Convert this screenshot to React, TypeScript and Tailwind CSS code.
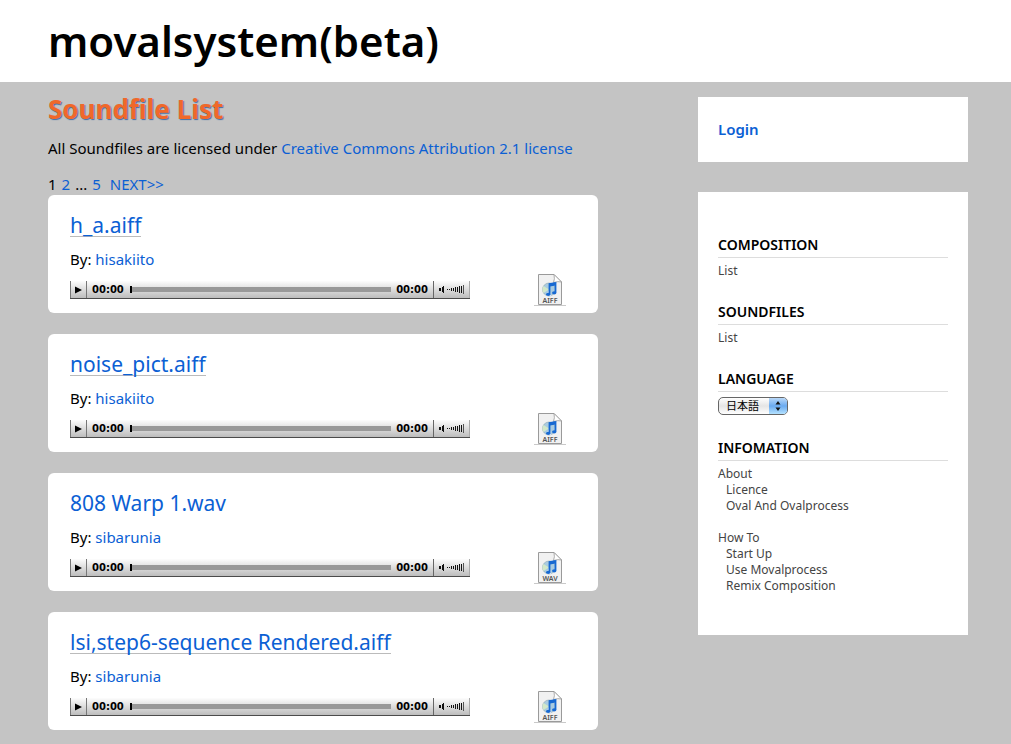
import React from "react";

type Sound = { title: string; author: string; kind: string; underlined: boolean };

const sounds: Sound[] = [
  { title: "h_a.aiff", author: "hisakiito", kind: "AIFF", underlined: true },
  { title: "noise_pict.aiff", author: "hisakiito", kind: "AIFF", underlined: true },
  { title: "808 Warp 1.wav", author: "sibarunia", kind: "WAV", underlined: false },
  { title: "lsi,step6-sequence Rendered.aiff", author: "sibarunia", kind: "AIFF", underlined: true },
];

function FileIcon({ kind }: { kind: string }) {
  return (
    <svg viewBox="0 0 32 32" className="block h-8 w-8" role="img" aria-label={kind + " file"}>
      <path d="M4.5 0.5H20L27.500 8V30.500H4.500Z" fill="#f1f1f1" stroke="#9a9a9a" />
      <path d="M20 0.500Q21 5 19.500 8.500Q24 7 27.500 8Z" fill="#fff" stroke="#999" strokeWidth="0.800" />
      <circle cx="15" cy="15.500" r="6.500" fill="#a9cbe0" stroke="#8aa3ad" strokeWidth="0.600" />
      <path d="M15 15.500L9.500 12A6.500 6.500 0 0 0 9.500 19Z" fill="#d2e8c9" />
      <path d="M15 15.500L12.500 21.500A6.500 6.500 0 0 0 17.500 21.500Z" fill="#d9e6f5" />
      <path d="M15.500 20V10L21.500 9V18.500" fill="none" stroke="#1769d2" strokeWidth="1.800" />
      <path d="M15.500 11L21.500 10" stroke="#1769d2" strokeWidth="2.800" />
      <ellipse cx="14.200" cy="20.300" rx="2.200" ry="1.600" fill="#1769d2" />
      <ellipse cx="20.200" cy="18.800" rx="2.200" ry="1.600" fill="#1769d2" />
      <text x="16" y="29" textAnchor="middle" fontFamily="Noto Sans, sans-serif" fontSize="7" fontWeight="600" fill="#555">{kind}</text>
      <path d="M0 31.500H32" stroke="#c9c9c9" />
    </svg>
  );
}

function Player() {
  return (
    <div className="flex h-[18px] w-full max-w-[400px] items-stretch border-b border-[#4b4b4b] bg-linear-to-b from-[#fdfdfd] to-[#bdbdbd] font-['DejaVu_Sans',sans-serif] text-[10px] leading-[18px] font-bold text-black">
      <button type="button" aria-label="Play" className="flex w-[17px] items-center justify-center border-x border-[#777]">
        <svg viewBox="0 0 7 8" className="h-2 w-[7px]"><path d="M0 0.500V7.500L7 4Z" fill="#000" /></svg>
      </button>
      <span className="pl-[5px]">00:00</span>
      <div className="ml-1.5 flex flex-1 items-center">
        <div className="h-[7px] w-0.5 bg-black" />
        <div className="h-[5px] flex-1 bg-[#999]" />
      </div>
      <span className="px-[5px]">00:00</span>
      <button type="button" aria-label="Volume" className="flex w-[37px] items-center justify-center border-x border-r-[#aaa] border-l-[#666]">
        <svg viewBox="0 0 26 9" className="h-[9px] w-[26px]" shapeRendering="crispEdges">
          <path d="M0 3H2V6H0ZM3 2H4V7H3ZM4 1H5V8H4ZM8 4H9V5H8ZM10 4H11V5H10ZM12 3H13V6H12ZM14 3H15V6H14ZM16 2H17V7H16ZM18 2H19V7H18ZM20 1H21V8H20ZM22 1H23V8H22Z" fill="#111" />
          <path d="M24 0H25V9H24Z" fill="#555" />
        </svg>
      </button>
    </div>
  );
}

function SoundCard({ sound }: { sound: Sound }) {
  return (
    <li className="rounded-md bg-white px-[22px] pt-4 pb-[7px]">
      <h3 className="flex h-[26px] text-[21px] leading-7">
        <a href="#" className={sound.underlined ? "h-[26px] border-b border-[#bbb]" : ""}>{sound.title}</a>
      </h3>
      <p className="mt-[11px] leading-[22px] text-black">By: <a href="#">{sound.author}</a></p>
      <div className="mt-1 flex items-center justify-between pr-2.5">
        <Player />
        <a href="#"><FileIcon kind={sound.kind} /></a>
      </div>
    </li>
  );
}

function Heading({ children }: { children: React.ReactNode }) {
  return <h2 className="border-b border-[#ddd] text-[14px] leading-6 font-semibold text-black">{children}</h2>;
}

export default function App() {
  return (
    <div className="min-h-screen bg-[#c4c4c4] font-['Noto_Sans','Noto_Sans_CJK_JP',sans-serif] text-[15px] text-black [&_main_a]:text-[#0b60d4]">
      <header className="bg-white px-12 py-[11px]">
        <h1 className="text-[42px] leading-[60px] font-semibold">movalsystem(beta)</h1>
      </header>
      <div className="flex items-start justify-between gap-6 pr-[43px] pl-12">
        <main className="max-w-[550px] flex-1 pt-[11px] pb-4">
          <h2 className="text-[26px] leading-8 font-bold text-[#f0682a] [text-shadow:1px_1px_1px_#3f6fa8]">Soundfile List</h2>
          <p className="mt-3 leading-[22px]">All Soundfiles are licensed under <a href="#">Creative Commons Attribution 2.1 license</a></p>
          <nav className="mt-[15px] flex gap-[5px] leading-[21px]">
            <span>1</span><a href="#">2</a><span>...</span><a href="#">5</a><a href="#" className="pl-1">NEXT&gt;&gt;</a>
          </nav>
          <ul className="flex flex-col gap-[21px]">
            {sounds.map((s) => <SoundCard key={s.title} sound={s} />)}
          </ul>
        </main>
        <aside className="mt-[15px] flex w-[270px] shrink-0 flex-col gap-[30px]">
          <section className="bg-white px-5 py-[21px] leading-[23px]">
            <a href="#" className="font-semibold text-[#0b60d4]">Login</a>
          </section>
          <section className="bg-white px-5 py-[41px] text-[12px] leading-4 text-[#444]">
            <Heading>COMPOSITION</Heading>
            <p className="mt-[5px] mb-[21px]"><a href="#">List</a></p>
            <Heading>SOUNDFILES</Heading>
            <p className="mt-[5px] mb-[21px]"><a href="#">List</a></p>
            <Heading>LANGUAGE</Heading>
            <div className="relative mt-[5px] mb-[21px] h-[18px] w-[70px] overflow-hidden rounded-[5px] border border-[#666] bg-linear-to-b from-white via-[#e5e5e5] to-white">
              <select aria-label="Language" className="block h-4 w-full appearance-none pl-[7px] text-[11px] leading-4 text-black">
                <option>日本語</option>
                <option>English</option>
              </select>
              <svg viewBox="0 0 18 16" className="pointer-events-none absolute top-0 right-0 h-4 w-[18px]">
                <defs>
                  <linearGradient id="aqua" x1="0" y1="0" x2="0" y2="1">
                    <stop offset="0" stopColor="#b9d8f8" /><stop offset="0.500" stopColor="#6aaaf0" /><stop offset="1" stopColor="#b4e2ff" />
                  </linearGradient>
                </defs>
                <rect width="18" height="16" fill="url(#aqua)" />
                <path d="M6.500 6.500L9 3L11.500 6.500ZM6.500 9.500L9 13L11.500 9.500Z" fill="#111" />
              </svg>
            </div>
            <Heading>INFOMATION</Heading>
            <ul className="mt-[5px]">
              <li><a href="#">About</a>
                <ul className="mb-4 pl-2">
                  <li><a href="#">Licence</a></li>
                  <li><a href="#">Oval And Ovalprocess</a></li>
                </ul>
              </li>
              <li><a href="#">How To</a>
                <ul className="pl-2">
                  <li><a href="#">Start Up</a></li>
                  <li><a href="#">Use Movalprocess</a></li>
                  <li><a href="#">Remix Composition</a></li>
                </ul>
              </li>
            </ul>
          </section>
        </aside>
      </div>
    </div>
  );
}
